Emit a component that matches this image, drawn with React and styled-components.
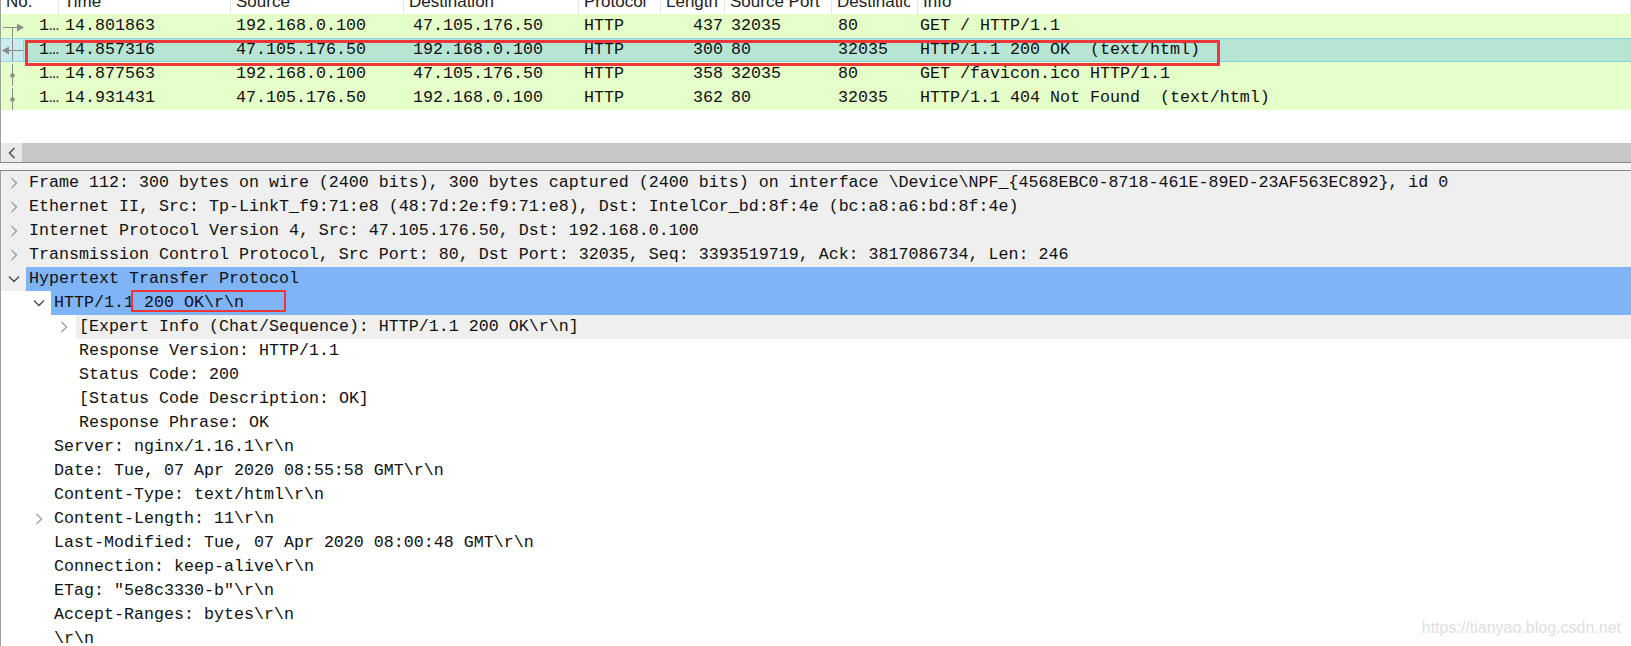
import React from 'react';
import styled, { createGlobalStyle } from 'styled-components';

const MONO = `"Liberation Mono", "DejaVu Sans Mono", monospace`;
const SANS = `"Liberation Sans", Arial, sans-serif`;

const GlobalStyle = createGlobalStyle`
  html, body { margin: 0; padding: 0; background: #fff; }
  body { font-family: ${MONO}; color: #111; }
`;

// column geometry of the packet list
const HEAD_COLS = '58px 172px 173px 175px 82px 64px 107px 86px 1fr';
const ROW_COLS = '60px 171px 177px 171px 82px 65px 107px 82px 1fr';

const Window = styled.div`
  position: relative;
  width: 1631px;
  height: 646px;
  overflow: hidden;
  background: #fff;
  display: flex;
  flex-direction: column;
`;

const PacketPane = styled.div`
  height: 162px;
  flex: none;
  display: flex;
  flex-direction: column;
  border-left: 1px solid #a0a0a0;
`;

const HeaderBar = styled.div`
  display: grid;
  grid-template-columns: ${HEAD_COLS};
  height: 14px;
  overflow: hidden;
  background: #fff;
`;

const HeaderCell = styled.div`
  border-right: 1px solid #e3e3e3;
  padding: 0 ${p => (p.$tight ? 7 : 4)}px 0 5px;
  overflow: hidden;
  white-space: nowrap;
  font-family: ${SANS};
  font-size: 17px;
  color: #222;
  & > span {
    display: block;
    overflow: hidden;
    margin-top: -10px;
    line-height: 24px;
  }
`;

const PacketRow = styled.div`
  display: grid;
  grid-template-columns: ${ROW_COLS};
  height: 24px;
  box-sizing: border-box;
  background: ${p => (p.$selected ? '#b6e6d3' : '#e4ffc7')};
  border-top: 1px solid ${p => (p.$selected ? '#80d2e4' : 'transparent')};
  border-bottom: 1px solid ${p => (p.$selected ? '#80d2e4' : 'transparent')};
  font-size: 16.67px;
  line-height: 22px;
  white-space: pre;
`;

const Cell = styled.div`
  overflow: hidden;
  padding: 0 4px;
  text-align: ${p => (p.$right ? 'right' : 'left')};
`;

const NoCell = styled.div`
  display: flex;
  justify-content: space-between;
  align-items: stretch;
  padding-right: 2px;
`;

const Mark = styled.div`
  width: 23px;
  margin-top: ${p => (p.$selected ? '-1px' : '0')};
  margin-bottom: ${p => (p.$selected ? '-1px' : '0')};
  box-sizing: border-box;
  background: ${p => (p.$selected ? '#c9ecef' : 'transparent')};
  border: 1px solid ${p => (p.$selected ? '#8fd6e8' : 'transparent')};
  border-left: none;
  & svg { display: block; }
`;

const ListFill = styled.div`
  flex: 1;
  background: #fff;
`;

const HScroll = styled.div`
  height: 19px;
  display: flex;
  background: #c8c8c8;
`;

const ScrollButton = styled.div`
  width: 21px;
  background: #e8e8e8;
  display: flex;
  align-items: center;
  justify-content: center;
`;

const Splitter = styled.div`
  height: 9px;
  flex: none;
  box-sizing: border-box;
  background: #f4f4f4;
  border-top: 1px solid #82878f;
  border-bottom: 1px solid #82878f;
`;

const DetailPane = styled.div`
  flex: 1;
  border-left: 1px solid #a0a0a0;
  background: #fff;
  font-size: 16.67px;
`;

const TreeRow = styled.div`
  display: flex;
  height: 24px;
  background: ${p => (p.$top ? '#efefef' : 'transparent')};
`;

const Indent = styled.div`
  flex: none;
  width: ${p => p.$level * 25}px;
`;

const Branch = styled.div`
  flex: none;
  width: 25px;
  display: flex;
  align-items: center;
  justify-content: center;
`;

const Item = styled.div`
  flex: 1;
  padding-left: 3px;
  line-height: 24px;
  white-space: pre;
  overflow: hidden;
  background: ${p => (p.$tone === 'blue' ? '#7fb4f6' : p.$tone === 'grey' ? '#efefef' : 'transparent')};
`;

const RedBox = styled.div`
  position: absolute;
  left: ${p => p.$x}px;
  top: ${p => p.$y}px;
  width: ${p => p.$w}px;
  height: ${p => p.$h}px;
  box-sizing: border-box;
  border: ${p => p.$t}px solid #ee3636;
  pointer-events: none;
`;

const Watermark = styled.div`
  position: absolute;
  right: 10px;
  bottom: 9px;
  font-family: ${SANS};
  font-size: 16px;
  line-height: 18px;
  color: #e0e0e0;
`;

const headers = ['No.', 'Time', 'Source', 'Destination', 'Protocol', 'Length', 'Source Port', 'Destination Port', 'Info'];

const packets = [
  { time: '14.801863', src: '192.168.0.100', dst: '47.105.176.50', len: '437', sport: '32035', dport: '80', info: 'GET / HTTP/1.1', mark: 'first' },
  { time: '14.857316', src: '47.105.176.50', dst: '192.168.0.100', len: '300', sport: '80', dport: '32035', info: 'HTTP/1.1 200 OK  (text/html)', mark: 'back', selected: true },
  { time: '14.877563', src: '192.168.0.100', dst: '47.105.176.50', len: '358', sport: '32035', dport: '80', info: 'GET /favicon.ico HTTP/1.1', mark: 'dot' },
  { time: '14.931431', src: '47.105.176.50', dst: '192.168.0.100', len: '362', sport: '80', dport: '32035', info: 'HTTP/1.1 404 Not Found  (text/html)', mark: 'dot' },
];

const tree = [
  { level: 0, top: true, branch: 'closed', text: 'Frame 112: 300 bytes on wire (2400 bits), 300 bytes captured (2400 bits) on interface \\Device\\NPF_{4568EBC0-8718-461E-89ED-23AF563EC892}, id 0' },
  { level: 0, top: true, branch: 'closed', text: 'Ethernet II, Src: Tp-LinkT_f9:71:e8 (48:7d:2e:f9:71:e8), Dst: IntelCor_bd:8f:4e (bc:a8:a6:bd:8f:4e)' },
  { level: 0, top: true, branch: 'closed', text: 'Internet Protocol Version 4, Src: 47.105.176.50, Dst: 192.168.0.100' },
  { level: 0, top: true, branch: 'closed', text: 'Transmission Control Protocol, Src Port: 80, Dst Port: 32035, Seq: 3393519719, Ack: 3817086734, Len: 246' },
  { level: 0, top: true, branch: 'open', tone: 'blue', text: 'Hypertext Transfer Protocol' },
  { level: 1, branch: 'open', tone: 'blue', text: 'HTTP/1.1 200 OK\\r\\n' },
  { level: 2, branch: 'closed', tone: 'grey', text: '[Expert Info (Chat/Sequence): HTTP/1.1 200 OK\\r\\n]' },
  { level: 2, text: 'Response Version: HTTP/1.1' },
  { level: 2, text: 'Status Code: 200' },
  { level: 2, text: '[Status Code Description: OK]' },
  { level: 2, text: 'Response Phrase: OK' },
  { level: 1, text: 'Server: nginx/1.16.1\\r\\n' },
  { level: 1, text: 'Date: Tue, 07 Apr 2020 08:55:58 GMT\\r\\n' },
  { level: 1, text: 'Content-Type: text/html\\r\\n' },
  { level: 1, branch: 'closed', text: 'Content-Length: 11\\r\\n' },
  { level: 1, text: 'Last-Modified: Tue, 07 Apr 2020 08:00:48 GMT\\r\\n' },
  { level: 1, text: 'Connection: keep-alive\\r\\n' },
  { level: 1, text: 'ETag: "5e8c3330-b"\\r\\n' },
  { level: 1, text: 'Accept-Ranges: bytes\\r\\n' },
  { level: 1, text: '\\r\\n' },
];

function RelatedMark({ kind }) {
  const c = '#8c8c8c';
  return (
    <svg width="23" height="22" viewBox="0 0 23 22">
      {kind === 'first' && <line x1="11.5" y1="11" x2="11.5" y2="22" stroke={c} strokeWidth="1" />}
      {kind !== 'first' && <line x1="11.5" y1="-2" x2="11.5" y2="24" stroke={c} strokeWidth="1" />}
      {kind === 'first' && (
        <>
          <line x1="2" y1="11.5" x2="18" y2="11.5" stroke={c} strokeWidth="1" />
          <polygon points="16,7.5 23,11.5 16,15.5" fill={c} />
        </>
      )}
      {kind === 'back' && (
        <>
          <line x1="6" y1="11.5" x2="22" y2="11.5" stroke={c} strokeWidth="1" />
          <polygon points="8,7.5 1,11.5 8,15.5" fill={c} />
        </>
      )}
      {kind === 'dot' && <circle cx="11.5" cy="11.5" r="2.2" fill={c} />}
    </svg>
  );
}

function Chevron({ state }) {
  if (state === 'open') {
    return (
      <svg width="12" height="8" viewBox="0 0 12 8">
        <polyline points="1,1.5 6,6.5 11,1.5" fill="none" stroke="#4a4a4a" strokeWidth="1.4" />
      </svg>
    );
  }
  return (
    <svg width="8" height="12" viewBox="0 0 8 12">
      <polyline points="1.5,1 6.5,6 1.5,11" fill="none" stroke="#a0a0a0" strokeWidth="1.4" />
    </svg>
  );
}

function ScrollLeft() {
  return (
    <svg width="8" height="12" viewBox="0 0 8 12">
      <polyline points="6.5,1 1.5,6 6.5,11" fill="none" stroke="#555" strokeWidth="1.6" />
    </svg>
  );
}

export default function App() {
  return (
    <Window>
      <GlobalStyle />
      <PacketPane>
        <HeaderBar>
          {headers.map(h => (
            <HeaderCell key={h} $tight={h === 'Destination Port'}><span>{h}</span></HeaderCell>
          ))}
        </HeaderBar>
        {packets.map(p => (
          <PacketRow key={p.time} $selected={p.selected}>
            <NoCell>
              <Mark $selected={p.selected}><RelatedMark kind={p.mark} /></Mark>
              <span>1…</span>
            </NoCell>
            <Cell>{p.time}</Cell>
            <Cell>{p.src}</Cell>
            <Cell>{p.dst}</Cell>
            <Cell>HTTP</Cell>
            <Cell $right>{p.len}</Cell>
            <Cell>{p.sport}</Cell>
            <Cell>{p.dport}</Cell>
            <Cell>{p.info}</Cell>
          </PacketRow>
        ))}
        <ListFill />
        <HScroll>
          <ScrollButton><ScrollLeft /></ScrollButton>
        </HScroll>
      </PacketPane>
      <Splitter />
      <DetailPane>
        {tree.map((n, i) => (
          <TreeRow key={i} $top={n.top}>
            <Indent $level={n.level} />
            <Branch>{n.branch && <Chevron state={n.branch} />}</Branch>
            <Item $tone={n.tone}>{n.text}</Item>
          </TreeRow>
        ))}
      </DetailPane>
      <RedBox $x={25} $y={40} $w={1195} $h={26} $t={3} />
      <RedBox $x={131} $y={290} $w={155} $h={22} $t={2} />
      <Watermark>https://tianyao.blog.csdn.net</Watermark>
    </Window>
  );
}
